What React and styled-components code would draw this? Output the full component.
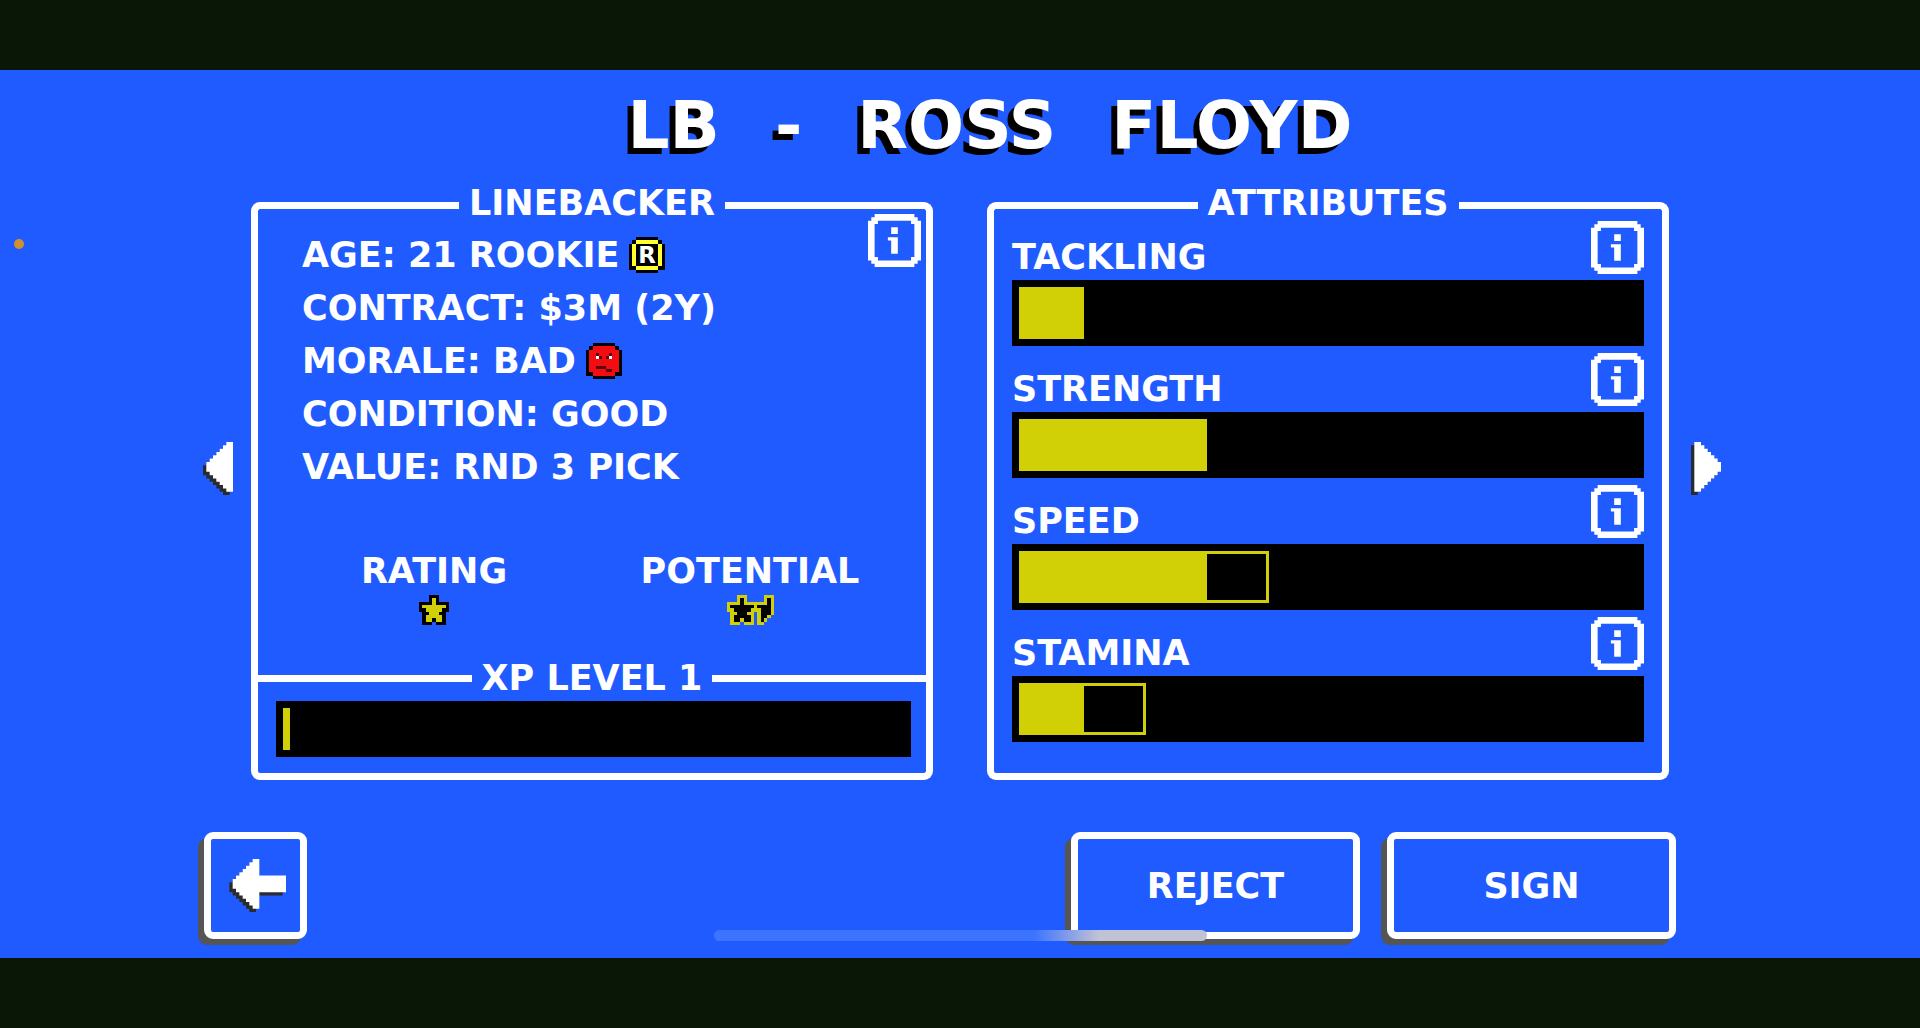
import React from "react";
import styled, { createGlobalStyle } from "styled-components";

const GlobalStyle = createGlobalStyle`
  * {
    box-sizing: border-box;
  }
  body {
    margin: 0;
    background-color: #0b1706;
    color: white;
    font-family: "DejaVu Sans", sans-serif;
    font-weight: bold;
    font-size: 35px;
    line-height: 34px;
    text-transform: uppercase;
  }
`;

const Screen = styled.div`
  display: flex;
  flex-direction: column;
  min-height: 100vh;
  padding: 70px 0;
`;
const Main = styled.main`
  position: relative;
  flex: 1;
  padding: 0 199px 0 203px;
  background-color: #1f5bff;
`;
const Title = styled.h1`
  margin: 0 0 4px;
  padding-left: 56px;
  font-size: 66px;
  line-height: 112px;
  text-align: center;
  text-shadow: -6px 6px 0 black;
`;
const Word = styled.span`
  margin: 0 16px;
`;
const Content = styled.div`
  display: flex;
  align-items: stretch;
`;
const PageButton = styled.button`
  align-self: center;
  display: flex;
  margin: 0;
  margin-bottom: 30px;
  padding: 0;
  border: none;
  background: none;
  cursor: pointer;
`;
const Panels = styled.div`
  flex: 1;
  display: grid;
  grid-template-columns: 1fr 1fr;
  gap: 54px;
  margin: 0 22px 0 18px;
`;
const Panel = styled.section`
  position: relative;
  display: flex;
  flex-direction: column;
`;
const PanelHeader = styled.header`
  display: flex;
  gap: 10px;
`;
const Edge = styled.div`
  flex: 1;
  height: 18px;
  margin-top: 16px;
  border: 0 solid white;
  border-top-width: 7px;
  ${(props) =>
    props.$side === "left"
      ? "border-left-width: 7px; border-top-left-radius: 9px;"
      : "border-right-width: 7px; border-top-right-radius: 9px;"}
`;
const PanelTitle = styled.h2`
  margin: 0;
  font-size: 35px;
  line-height: 34px;
`;
const PanelBody = styled.div`
  flex: 1;
  padding-bottom: 16px;
  border: 7px solid white;
  border-top: none;
  border-radius: 0 0 9px 9px;
`;
const InfoButton = styled.button`
  display: flex;
  padding: 0;
  border: none;
  background: none;
  cursor: pointer;
`;
const PanelInfo = styled.div`
  position: absolute;
  top: 28px;
  right: 12px;
`;
const Facts = styled.ul`
  margin: 0;
  padding: 8px 0 0 44px;
  list-style: none;
`;
const Fact = styled.li`
  display: flex;
  align-items: center;
  gap: 10px;
  height: 53px;
`;
const Scores = styled.div`
  display: grid;
  grid-template-columns: 1fr 1fr;
  margin-top: 61px;
  padding: 0 18px;
`;
const Score = styled.div`
  display: flex;
  flex-direction: column;
  align-items: center;
  gap: 7px;
`;
const Divider = styled.div`
  display: flex;
  align-items: center;
  gap: 10px;
  margin: 36px 0 6px;
`;
const Line = styled.div`
  flex: 1;
  height: 7px;
  background-color: white;
`;
const Bar = styled.div`
  display: grid;
  height: ${(props) => (props.$slim ? "56px" : "66px")};
  margin: ${(props) => (props.$slim ? "0 15px 0 18px" : "0")};
  padding: 7px;
  background-color: black;
`;
const Fill = styled.div`
  grid-area: 1 / 1;
  background-color: #d1d006;
`;
const Limit = styled.div`
  grid-area: 1 / 1;
  border: 3px solid #d1d006;
`;
const Attributes = styled.div`
  display: grid;
  gap: 7px;
  padding: 1px 18px 0;
`;
const AttributeHeader = styled.div`
  display: flex;
  justify-content: space-between;
  align-items: flex-end;
  margin-bottom: 6px;
`;
const Footer = styled.footer`
  display: flex;
  gap: 27px;
  margin: 52px 45px 0 1px;
`;
const ActionButton = styled.button`
  display: flex;
  align-items: center;
  justify-content: center;
  width: ${(props) => (props.$square ? "103px" : "289px")};
  height: 107px;
  margin-right: ${(props) => (props.$square ? "auto" : "0")};
  padding: 0;
  border: 7px solid white;
  border-radius: 9px;
  background-color: #1f5bff;
  box-shadow: -6px 6px 0 #555;
  color: white;
  font: inherit;
  text-transform: inherit;
  cursor: pointer;
`;
const HomeIndicator = styled.div`
  position: absolute;
  bottom: 17px;
  left: 50%;
  width: 493px;
  height: 11px;
  margin-left: -246px;
  border-radius: 6px;
  background: linear-gradient(to right, #3d74ff 65%, #c0c2d5 78%);
`;
const Dot = styled.div`
  position: absolute;
  top: 169px;
  left: 14px;
  width: 10px;
  height: 10px;
  border-radius: 50%;
  background-color: #d18f2e;
`;

const COLORS = {
  B: "black",
  Y: "#d1d006",
  R: "#f20d12",
  D: "#5c0508",
  W: "white",
  L: "#ffff2e",
};

const STAR = [
  "...BBB...",
  "...BYB...",
  "BBBBYBBBB",
  "BYYYYYYYB",
  "BBYYYYYBB",
  ".BBYYYBB.",
  ".BYYYYYB.",
  ".BYYBYYB.",
  ".BBB.BBB.",
];
const STAR_AND_HALF = [
  "...YYY.....YYY",
  "...YBY.....YBY",
  "YYYYBYYYYYYYBY",
  "YBBBBBBBYBBBBY",
  "YYBBBBBYYYBBBY",
  ".YYBBBYY.YBBBY",
  ".YBBBBBY.YBBY.",
  ".YBBYBBY.YBY..",
  ".YYY.YYY.YY...",
];
const ANGRY_FACE = [
  "..BBBBBBB..",
  ".BRRRRRRRB.",
  "BRRRRRRRRRB",
  "BRRDRRRDRRB",
  "BRRWDRDWRRB",
  "BRRRRRRRRRB",
  "BRRRRRRRRRB",
  "BRRDDDRRRRB",
  "BRRRRRDDRRB",
  "BBRRRRRRRBB",
  "..BBBBBBB..",
];
const BADGE = [
  "..BBBBBBB..",
  ".BLLLLLLLB.",
  "BLBBBBBBBLB",
  "BLBBBBBBBLB",
  "BLBBBBBBBLB",
  "BLBBBBBBBLB",
  "BLBBBBBBBLB",
  "BLBBBBBBBLB",
  "BLBBBBBBBLB",
  "BBLLLLLLLBB",
  "..BBBBBBB..",
];

function Sprite({ rows, width, height, label, children }) {
  return (
    <svg
      width={width}
      height={height}
      viewBox={`0 0 ${rows[0].length} ${rows.length}`}
      preserveAspectRatio="none"
      role="img"
      aria-label={label}
    >
      <g shapeRendering="crispEdges">
        {rows.map((row, y) =>
          row
            .split("")
            .map((key, x) =>
              key === "." ? null : (
                <rect key={x + "-" + y} x={x} y={y} width="1" height="1" fill={COLORS[key]} />
              )
            )
        )}
      </g>
      {children}
    </svg>
  );
}

function InfoIcon() {
  return (
    <svg width="53" height="53" viewBox="0 0 16 16" fill="white">
      <path d="M2 0h12v1h1v1h1v12h-1v1h-1v1H2v-1H1v-1H0V2h1V1h1zM3 2v1H2v10h1v1h10v-1h1V3h-1V2z" fillRule="evenodd" />
      <path d="M7 4h2v2H7zM6 7h3v5H7V8H6z" />
    </svg>
  );
}

const HEAD = "M7 0h2v15H7v-1H6v-1H5v-1H4v-1H3v-1H2V9H1V6h1V5h1V4h1V3h1V2h1V1h1z";

function ArrowHead({ flip }) {
  // the shadow always falls down and to the left
  const turn = flip ? "translate(10 0) scale(-1 1)" : undefined;
  return (
    <svg width="30" height="53" viewBox="0 0 9 16" preserveAspectRatio="none">
      <path d={HEAD} fill="#2b2b2b" transform={`translate(-1 1) ${turn || ""}`} />
      <path d={HEAD} fill="white" transform={turn} />
    </svg>
  );
}

function BackArrow() {
  const d = HEAD + "M9 5h8v5H9z";
  return (
    <svg width="60" height="53" viewBox="-1 0 18 16" preserveAspectRatio="none">
      <path d={d} fill="#2b2b2b" transform="translate(-1 1)" />
      <path d={d} fill="white" />
    </svg>
  );
}

function Info({ label }) {
  return (
    <InfoButton type="button" aria-label={label}>
      <InfoIcon />
    </InfoButton>
  );
}

function Attribute(props) {
  const { name, level, limit } = props.item;
  return (
    <div>
      <AttributeHeader>
        <span>{name}</span>
        <Info label={"About " + name} />
      </AttributeHeader>
      <Bar>
        {limit ? <Limit style={{ width: `calc(${limit * 10}% + 3px)` }} /> : ""}
        <Fill style={{ width: `calc(${level * 10}% + 3px)` }} />
      </Bar>
    </div>
  );
}

const attributes = [
  { name: "Tackling", level: 1 },
  { name: "Strength", level: 3 },
  { name: "Speed", level: 3, limit: 4 },
  { name: "Stamina", level: 1, limit: 2 },
];

function App() {
  return (
    <Screen>
      <GlobalStyle />
      <Main>
        <Dot />
        <Title>
          <Word>LB</Word> <Word>-</Word> <Word>Ross</Word> <Word>Floyd</Word>
        </Title>
        <Content>
          <PageButton type="button" aria-label="Previous player">
            <ArrowHead />
          </PageButton>
          <Panels>
            <Panel>
              <PanelHeader>
                <Edge $side="left" />
                <PanelTitle>Linebacker</PanelTitle>
                <Edge $side="right" />
              </PanelHeader>
              <PanelInfo>
                <Info label="About this position" />
              </PanelInfo>
              <PanelBody>
                <Facts>
                  <Fact>
                    Age: 21 Rookie
                    <Sprite rows={BADGE} width="36" height="36" label="Rookie">
                      <text x="5.5" y="8" fontSize="7" fill="white" textAnchor="middle">
                        R
                      </text>
                    </Sprite>
                  </Fact>
                  <Fact>Contract: $3M (2Y)</Fact>
                  <Fact>
                    Morale: Bad
                    <Sprite rows={ANGRY_FACE} width="36" height="36" label="Angry" />
                  </Fact>
                  <Fact>Condition: Good</Fact>
                  <Fact>Value: Rnd 3 Pick</Fact>
                </Facts>
                <Scores>
                  <Score>
                    <span>Rating</span>
                    <Sprite rows={STAR} width="30" height="30" label="1 star" />
                  </Score>
                  <Score>
                    <span>Potential</span>
                    <Sprite rows={STAR_AND_HALF} width="47" height="30" label="1.5 stars" />
                  </Score>
                </Scores>
                <Divider>
                  <Line />
                  <PanelTitle>XP Level 1</PanelTitle>
                  <Line />
                </Divider>
                <Bar $slim>
                  <Fill style={{ width: "7px" }} />
                </Bar>
              </PanelBody>
            </Panel>
            <Panel>
              <PanelHeader>
                <Edge $side="left" />
                <PanelTitle>Attributes</PanelTitle>
                <Edge $side="right" />
              </PanelHeader>
              <PanelBody>
                <Attributes>
                  {attributes.map((item) => (
                    <Attribute key={item.name} item={item} />
                  ))}
                </Attributes>
              </PanelBody>
            </Panel>
          </Panels>
          <PageButton type="button" aria-label="Next player">
            <ArrowHead flip />
          </PageButton>
        </Content>
        <Footer>
          <ActionButton type="button" $square aria-label="Back">
            <BackArrow />
          </ActionButton>
          <ActionButton type="button">Reject</ActionButton>
          <ActionButton type="button">Sign</ActionButton>
        </Footer>
        <HomeIndicator />
      </Main>
    </Screen>
  );
}

export default App;
